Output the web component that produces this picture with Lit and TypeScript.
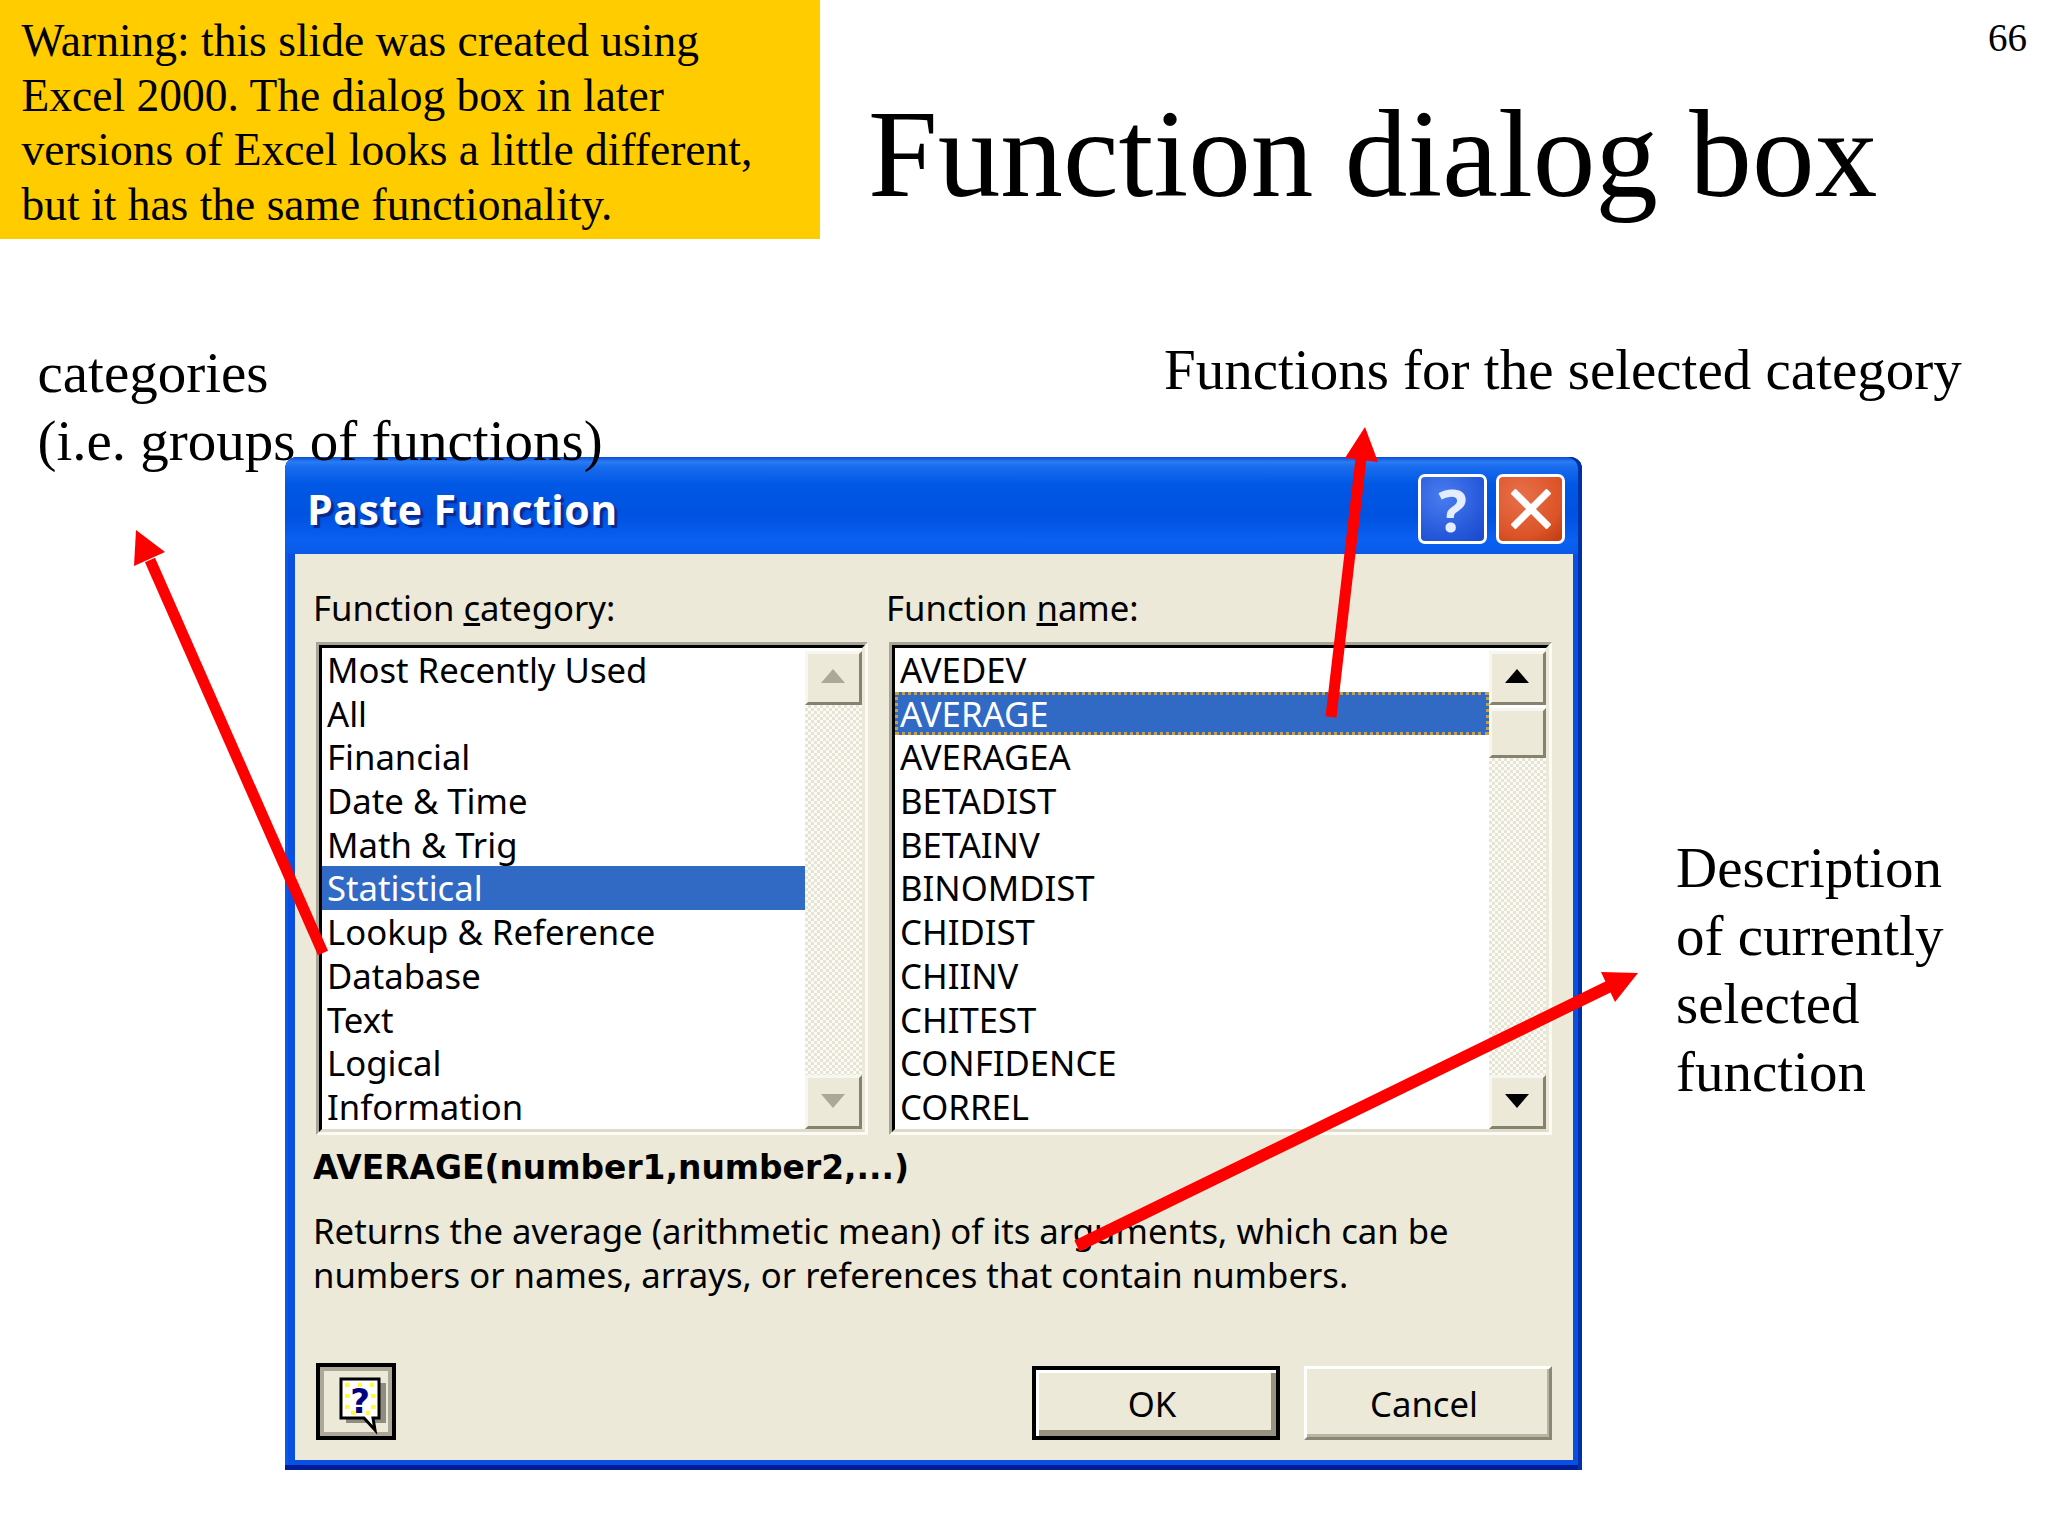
import { LitElement, html, css } from "lit";
import { customElement } from "lit/decorators.js";
import { classMap } from "lit/directives/class-map.js";

const CATEGORIES = ["Most Recently Used","All","Financial","Date & Time","Math & Trig","Statistical","Lookup & Reference","Database","Text","Logical","Information"];
const FUNCTIONS = ["AVEDEV","AVERAGE","AVERAGEA","BETADIST","BETAINV","BINOMDIST","CHIDIST","CHIINV","CHITEST","CONFIDENCE","CORREL"];

const tri = (up: boolean) => html`<svg class="tri" viewBox="0 0 24 14" width="24" height="14"><polygon points=${up ? "12,0 24,14 0,14" : "0,0 24,0 12,14"}></polygon></svg>`;

@customElement("app-root")
export class AppRoot extends LitElement {
  static styles = css`
    :host { display: block; width: 2048px; height: 1536px; }
    * { box-sizing: border-box; }
    .slide { position: relative; width: 2048px; height: 1536px; background: #fff; overflow: hidden; font-family: "Liberation Serif", serif; color: #000; }
    .header { display: flex; height: 239px; }
    .warning { width: 820px; height: 239px; background: #ffcc00; padding: 14px 0 0 21.5px; font-size: 45.5px; line-height: 54.7px; white-space: nowrap; }
    .title { margin-left: 48px; padding-top: 91px; font-size: 125.3px; line-height: 125px; white-space: nowrap; }
    .note { position: absolute; font-size: 57px; line-height: 68px; white-space: nowrap; }
    .cat { left: 37.5px; top: 339px; }
    .fn { left: 1164px; top: 336px; }
    .desc { left: 1676px; top: 834px; }
    .page { position: absolute; left: 1988px; top: 15px; font-size: 39px; line-height: 46px; }
    .arrows { position: absolute; left: 0; top: 0; pointer-events: none; }
    .arrows line { stroke: #ff0000; }
    .arrows polygon { fill: #ff0000; }

    .dialog { display: flex; flex-direction: column; width: 1297px; height: 1013px; margin: 218px 0 0 285px; padding: 0 9px 10px 10px; border-radius: 12px 12px 0 0; background: #0a50e0; box-shadow: inset -4px 0 0 #0030a8, inset 0 -5px 0 #001c98, inset 3px 0 0 #0a58e8; font-family: "Noto Sans", sans-serif; font-size: 34.7px; }
    .titlebar { display: flex; align-items: center; height: 97px; margin: 0 -9px 0 -10px; padding: 7px 17px 0 22px; border-radius: 12px 12px 0 0; background: linear-gradient(#0a4cd8 0%, #2a7cf2 5%, #1a6cee 10%, #0058e4 28%, #0052e0 60%, #0a60f2 86%, #0a5ae6 100%); box-shadow: inset -4px 0 0 #0030a8; }
    .caption { flex: 1; color: #fff; font: bold 41px/1 "Open Sans", sans-serif; text-shadow: 3px 3px 1px #0a2a90; letter-spacing: 0.5px; }
    .tb { display: flex; align-items: center; justify-content: center; width: 69px; height: 70px; margin-left: 9px; border: 3px solid #fff; border-radius: 7px; color: #fff; }
    .tb.help { background: radial-gradient(circle at 35% 30%, #4a7cf0, #2356d8 70%, #1a48c8); font: bold 60px/1 "Noto Sans", sans-serif; color: #e4ecff; }
    .tb.close { background: radial-gradient(circle at 35% 30%, #e8704a, #dc5428 65%, #c03a10); }

    .client { flex: 1; display: flex; flex-direction: column; background: #ece9d8; padding: 34px 21px 20px 21px; }
    .panes { display: grid; grid-template-columns: 552px 663px; column-gap: 21px; }
    .pane { display: flex; flex-direction: column; }
    .label { height: 40px; line-height: 40px; margin: 0 0 14px -3px; white-space: nowrap; }
    .list { display: flex; height: 493px; border: 3px solid; border-color: #a8a597 #fbfaf5 #fbfaf5 #a8a597; }
    .list-in { flex: 1; display: flex; min-width: 0; border: 3px solid; border-color: #000 #ece9d8 #dedbcb #000; background: #fff; }
    .items { flex: 1; min-width: 0; }
    .row { height: 43.7px; padding: 1px 0 0 5px; line-height: 42.7px; white-space: nowrap; }
    .row.sel { background: #316ac5; color: #fff; }
    .row.focus { outline: 3px dotted #c8a048; outline-offset: -3px; }
    .bar { display: flex; flex-direction: column; width: 57.5px; padding-top: 3px; }
    .sb { display: flex; align-items: center; justify-content: center; height: 54px; background: #ece9d8; border: 3px solid; border-color: #f7f6ef #85836f #85836f #f7f6ef; }
    .sb.up { padding-bottom: 4px; }
    .sb.down { padding-bottom: 2px; }
    .sb.thumb { height: 50px; margin-top: 3px; }
    .track { flex: 1; background-color: #f6f5ee; background-image: repeating-conic-gradient(#e6e4d4 0 25%, #fbfaf5 0 50%); background-size: 6px 6px; }
    .tri { fill: #000; }
    .dim .tri { fill: #aca899; }

    .formula { margin: 12px 0 0 -3px; height: 42px; font: 700 32.9px/42px "DejaVu Sans", sans-serif; white-space: nowrap; }
    .text { margin: 20px 0 0 -3px; line-height: 44px; white-space: pre-line; }
    .footer { margin-top: auto; display: flex; align-items: flex-end; }
    .qbtn { width: 80px; height: 77px; background: #ece9d8; border: 4px solid #000; box-shadow: inset 0 0 0 4px #aca899; }
    .qbtn svg { display: block; margin: -4px; }
    .spacer { flex: 1; }
    .btn { display: flex; align-items: center; justify-content: center; width: 248px; height: 74px; background: #ece9d8; }
    .btn.ok { border: 4px solid #000; box-shadow: inset 3px 3px 0 #fff, inset -5px -6px 0 #95927f; padding-right: 8px; }
    .btn.cancel { margin-left: 24px; padding-right: 8px; border: 3px solid; border-color: #fff #8a8873 #8a8873 #fff; box-shadow: inset -2px -3px 0 #b8b5a4; }
  `;

  private renderList(items: string[], selected: string, focus: boolean, dim: boolean) {
    return html`<div class="list"><div class="list-in">
      <div class="items">${items.map((t) => html`<div class=${classMap({ row: true, sel: t === selected, focus: focus && t === selected })}>${t}</div>`)}</div>
      <div class=${classMap({ bar: true, dim })}>
        <div class="sb up">${tri(true)}</div>
        ${dim ? "" : html`<div class="sb thumb"></div>`}
        <div class="track"></div>
        <div class="sb down">${tri(false)}</div>
      </div>
    </div></div>`;
  }

  render() {
    return html`<div class="slide">
      <div class="header">
        <div class="warning">Warning: this slide was created using<br>Excel 2000. The dialog box in later<br>versions of Excel looks a little different,<br>but it has the same functionality.</div>
        <div class="title">Function dialog box</div>
      </div>
      <div class="dialog">
        <div class="titlebar">
          <div class="caption">Paste Function</div>
          <div class="tb help">?</div>
          <div class="tb close"><svg viewBox="0 0 40 40" width="40" height="40"><path d="M2 2L38 38M38 2L2 38" stroke="#fff" stroke-width="7" fill="none"></path></svg></div>
        </div>
        <div class="client">
          <div class="panes">
            <div class="pane">
              <div class="label">Function <u>c</u>ategory:</div>
              ${this.renderList(CATEGORIES, "Statistical", false, true)}
            </div>
            <div class="pane">
              <div class="label">Function <u>n</u>ame:</div>
              ${this.renderList(FUNCTIONS, "AVERAGE", true, false)}
            </div>
          </div>
          <div class="formula">AVERAGE(number1,number2,...)</div>
          <div class="text">Returns the average (arithmetic mean) of its arguments, which can be
numbers or names, arrays, or references that contain numbers.</div>
          <div class="footer">
            <div class="qbtn"><svg viewBox="0 0 80 77" width="80" height="77">
              <path d="M30 20H70V60H30Z" fill="#8f8d80"></path>
              <path d="M25 16H63V55H57L59 67L48 55H25Z" fill="#fff" stroke="#000" stroke-width="3"></path>
              <g fill="#ffff30"><rect x="29" y="20" width="4" height="4"></rect><rect x="42" y="20" width="4" height="4"></rect><rect x="54" y="20" width="4" height="4"></rect><rect x="29" y="31" width="4" height="4"></rect><rect x="55" y="31" width="4" height="4"></rect><rect x="29" y="42" width="4" height="4"></rect><rect x="55" y="42" width="4" height="4"></rect><rect x="35" y="48" width="4" height="4"></rect><rect x="50" y="48" width="4" height="4"></rect></g>
              <text x="44" y="50" text-anchor="middle" font-family="DejaVu Sans" font-weight="700" font-size="34" fill="#000080">?</text>
            </svg></div>
            <div class="spacer"></div>
            <div class="btn ok">OK</div>
            <div class="btn cancel">Cancel</div>
          </div>
        </div>
      </div>
      <div class="note cat">categories<br>(i.e. groups of functions)</div>
      <div class="note fn">Functions for the selected category</div>
      <div class="note desc">Description<br>of currently<br>selected<br>function</div>
      <div class="page">66</div>
      <svg class="arrows" width="2048" height="1536" viewBox="0 0 2048 1536">
        <line x1="150" y1="560" x2="323" y2="953" stroke-width="11"></line>
        <polygon points="136,530 134,566 165,552"></polygon>
        <line x1="1362" y1="450" x2="1331" y2="717" stroke-width="11"></line>
        <polygon points="1365,427 1345,458 1378,462"></polygon>
        <line x1="1610" y1="986" x2="1077" y2="1246" stroke-width="12"></line>
        <polygon points="1638,973 1601,972 1615,1002"></polygon>
      </svg>
    </div>`;
  }
}
